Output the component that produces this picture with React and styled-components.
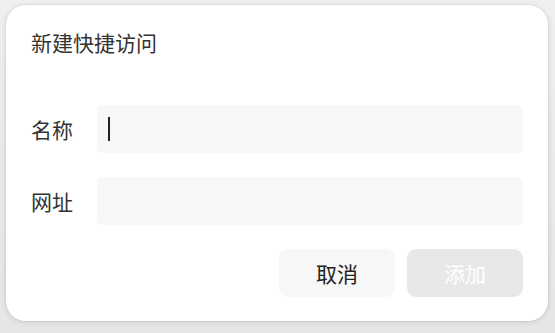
import React from "react";
import styled, { createGlobalStyle } from "styled-components";

const Global = createGlobalStyle`
  html, body { margin: 0; padding: 0; }
  body {
    width: 555px; height: 333px; overflow: hidden;
    background: linear-gradient(180deg, #f0f0f0 0%, #e6e6e6 100%);
    font-family: "Noto Sans CJK SC", "Noto Sans", sans-serif;
  }
  * { box-sizing: border-box; }
`;

const Page = styled.div`
  padding: 5px 7px 12px 6px;
`;

const Dialog = styled.div`
  width: 542px;
  height: 316px;
  background: #fff;
  border-radius: 20px;
  box-shadow: 0 1px 6px rgba(0, 0, 0, 0.12), 0 0 0 1px rgba(0, 0, 0, 0.03);
  padding: 24px 25px 24px 25px;
  display: flex;
  flex-direction: column;
`;

const Title = styled.div`
  font-size: 21px;
  line-height: 26px;
  color: #333;
  margin-bottom: 50px;
`;

const Row = styled.div`
  display: flex;
  align-items: center;
  height: 48px;
  margin-bottom: 24px;
`;

const Label = styled.label`
  width: 66px;
  font-size: 21px;
  color: #333;
  flex-shrink: 0;
`;

const Field = styled.div`
  position: relative;
  flex: 1;
  height: 48px;
`;

const Input = styled.input`
  width: 100%;
  height: 100%;
  border: none;
  outline: none;
  border-radius: 6px;
  background: #f7f7f7;
  padding: 0 12px;
  font-size: 18px;
  font-family: inherit;
  color: #222;
  caret-color: transparent;
`;

const Caret = styled.span`
  position: absolute;
  left: 11px;
  top: 12px;
  width: 2px;
  height: 24px;
  background: #222;
`;

const Actions = styled.div`
  display: flex;
  justify-content: flex-end;
  gap: 12px;
`;

const Button = styled.button`
  width: 116px;
  height: 48px;
  border: none;
  border-radius: 9px;
  font-family: inherit;
  font-size: 21px;
  background: ${(p) => (p.$primary ? "#e8e8e8" : "#f7f7f7")};
  color: ${(p) => (p.$primary ? "#ffffff" : "#222")};
  cursor: pointer;
`;

export default function App() {
  return (
    <Page>
      <Global />
      <Dialog>
        <Title>新建快捷访问</Title>
        <Row>
          <Label>名称</Label>
          <Field>
            <Input />
            <Caret />
          </Field>
        </Row>
        <Row>
          <Label>网址</Label>
          <Field>
            <Input />
          </Field>
        </Row>
        <Actions>
          <Button>取消</Button>
          <Button $primary disabled>添加</Button>
        </Actions>
      </Dialog>
    </Page>
  );
}
